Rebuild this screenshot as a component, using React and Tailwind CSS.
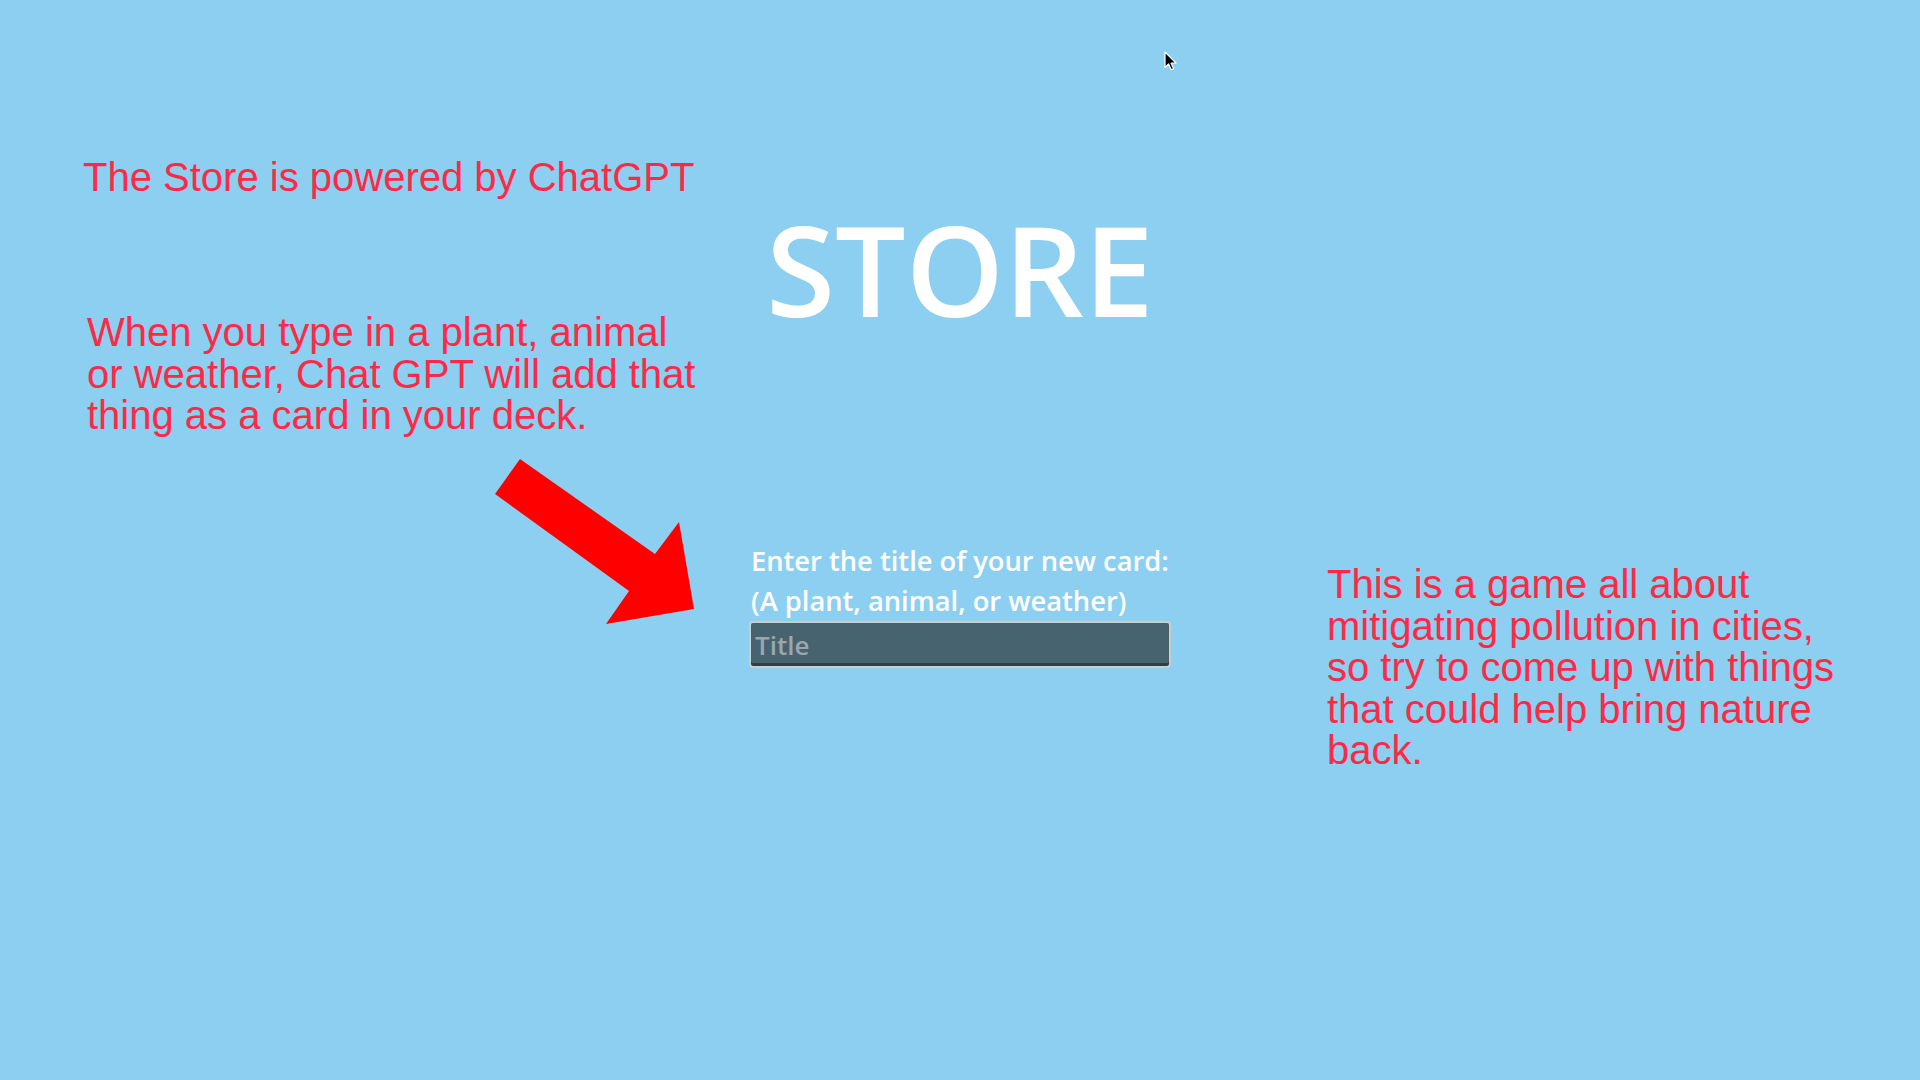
import React from 'react';

const RED = 'text-[#fe2a45]';

const StoreArrow = () => (
  <svg width="200" height="166" viewBox="0 0 200 166" className="block ml-[412px] mt-[22px]">
    <polygon points="25,0 160,95 184,63 199,150 111,165 134,132 0,35" fill="#ff0000" />
  </svg>
);

const Cursor = () => (
  <svg width="13" height="20" viewBox="0 0 13 20" className="absolute left-[1164px] top-[51px]">
    <path d="M1 1 L1 16.5 L4.6 13 L7.2 18.8 L9.6 17.8 L7.1 12.2 L12 12.2 Z" fill="#000" stroke="#fff" strokeWidth="1.2" strokeLinejoin="round" />
  </svg>
);

export default function App() {
  return (
    <div className="relative w-full h-[1080px] bg-[#8dcff1] overflow-hidden flex font-['Liberation_Sans',Arial,sans-serif]">
      {/* left notes */}
      <div className="w-[720px] shrink-0 pl-[83px] pt-[156px] flex flex-col items-start">
        <p className={`${RED} text-[40px] leading-[42px] whitespace-nowrap`}>The Store is powered by ChatGPT</p>
        <p className={`${RED} text-[40px] leading-[41.5px] whitespace-nowrap ml-1 mt-[114px]`}>
          When you type in a plant, animal<br />
          or weather, Chat GPT will add that<br />
          thing as a card in your deck.
        </p>
        <StoreArrow />
      </div>

      {/* store form */}
      <div className="w-[480px] shrink-0 pt-[205px] flex flex-col items-center font-['Open_Sans','Noto_Sans',sans-serif]">
        <h1 className="text-white text-[125px] leading-[128px] font-semibold">STORE</h1>
        <div className="w-[422px] mt-[208px]">
          <label className="block pl-[2px] text-white text-[27.3px] leading-[40px] font-semibold whitespace-nowrap">
            Enter the title of your new card:<br />
            (A plant, animal, or weather)
          </label>
          <input
            type="text"
            placeholder="Title"
            className="block w-full h-[47px] px-[4px] rounded-[4px] border-2 border-[#c6ced2] bg-[#47636f] shadow-[inset_0_-3px_0_#2b3f4a] text-[26px] font-semibold text-white placeholder:text-[#9aa7ad] outline-none"
          />
        </div>
      </div>

      {/* right note */}
      <div className="flex-1 pl-[127px] pt-[564px]">
        <p className={`${RED} text-[40px] leading-[41.5px] whitespace-nowrap`}>
          This is a game all about<br />
          mitigating pollution in cities,<br />
          so try to come up with things<br />
          that could help bring nature<br />
          back.
        </p>
      </div>

      <Cursor />
    </div>
  );
}
